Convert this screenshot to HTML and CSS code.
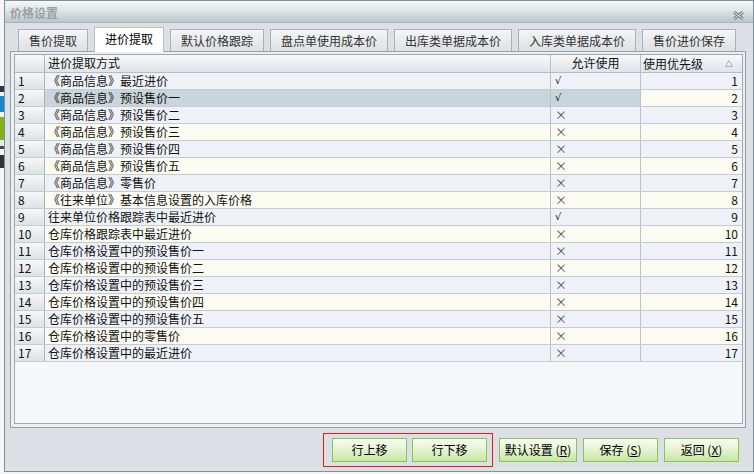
FILE: index.html
```html
<!DOCTYPE html>
<html lang="zh-CN">
<head>
<meta charset="utf-8">
<title>价格设置</title>
<link rel="stylesheet" href="styles.css">
</head>
<body>
<div class="screen">
  <div class="behind"></div>
  <div class="dialog">
    <div class="titlebar">
      <span class="title">价格设置</span>
      <svg class="close" width="11" height="9" viewBox="0 0 11 9">
        <path d="M1 1 L10 8 M10 1 L1 8" stroke="#707a7e" stroke-width="3" fill="none"/>
        <path d="M1 1 L10 8 M10 1 L1 8" stroke="#f2f4f4" stroke-width="1" fill="none"/>
      </svg>
    </div>
    <div class="tabs">
      <div class="tab">售价提取</div>
      <div class="tab active">进价提取</div>
      <div class="tab">默认价格跟踪</div>
      <div class="tab">盘点单使用成本价</div>
      <div class="tab">出库类单据成本价</div>
      <div class="tab">入库类单据成本价</div>
      <div class="tab">售价进价保存</div>
    </div>
    <div class="panel">
      <div class="grid">
        <div class="row head">
          <div class="c num"></div>
          <div class="c main">进价提取方式</div>
          <div class="c allow center">允许使用</div>
          <div class="c prio left">使用优先级<svg class="sort" width="8" height="7" viewBox="0 0 8 7"><path d="M4 0.5 L7.5 6.5 L0.5 6.5 Z" fill="none" stroke="#b0b4b8" stroke-width="1"/></svg></div>
        </div>
        <div class="row odd"><div class="c num">1</div><div class="c main">《商品信息》最近进价</div><div class="c allow ok">√</div><div class="c prio">1</div></div>
        <div class="row even sel"><div class="c num">2</div><div class="c main">《商品信息》预设售价一</div><div class="c allow ok">√</div><div class="c prio">2</div></div>
        <div class="row odd"><div class="c num">3</div><div class="c main">《商品信息》预设售价二</div><div class="c allow no">×</div><div class="c prio">3</div></div>
        <div class="row even"><div class="c num">4</div><div class="c main">《商品信息》预设售价三</div><div class="c allow no">×</div><div class="c prio">4</div></div>
        <div class="row odd"><div class="c num">5</div><div class="c main">《商品信息》预设售价四</div><div class="c allow no">×</div><div class="c prio">5</div></div>
        <div class="row even"><div class="c num">6</div><div class="c main">《商品信息》预设售价五</div><div class="c allow no">×</div><div class="c prio">6</div></div>
        <div class="row odd"><div class="c num">7</div><div class="c main">《商品信息》零售价</div><div class="c allow no">×</div><div class="c prio">7</div></div>
        <div class="row even"><div class="c num">8</div><div class="c main">《往来单位》基本信息设置的入库价格</div><div class="c allow no">×</div><div class="c prio">8</div></div>
        <div class="row odd"><div class="c num">9</div><div class="c main">往来单位价格跟踪表中最近进价</div><div class="c allow ok">√</div><div class="c prio">9</div></div>
        <div class="row even"><div class="c num">10</div><div class="c main">仓库价格跟踪表中最近进价</div><div class="c allow no">×</div><div class="c prio">10</div></div>
        <div class="row odd"><div class="c num">11</div><div class="c main">仓库价格设置中的预设售价一</div><div class="c allow no">×</div><div class="c prio">11</div></div>
        <div class="row even"><div class="c num">12</div><div class="c main">仓库价格设置中的预设售价二</div><div class="c allow no">×</div><div class="c prio">12</div></div>
        <div class="row odd"><div class="c num">13</div><div class="c main">仓库价格设置中的预设售价三</div><div class="c allow no">×</div><div class="c prio">13</div></div>
        <div class="row even"><div class="c num">14</div><div class="c main">仓库价格设置中的预设售价四</div><div class="c allow no">×</div><div class="c prio">14</div></div>
        <div class="row odd"><div class="c num">15</div><div class="c main">仓库价格设置中的预设售价五</div><div class="c allow no">×</div><div class="c prio">15</div></div>
        <div class="row even"><div class="c num">16</div><div class="c main">仓库价格设置中的零售价</div><div class="c allow no">×</div><div class="c prio">16</div></div>
        <div class="row odd"><div class="c num">17</div><div class="c main">仓库价格设置中的最近进价</div><div class="c allow no">×</div><div class="c prio">17</div></div>
      </div>
    </div>
    <div class="footer">
      <div class="mark">
        <button class="btn">行上移</button>
        <button class="btn">行下移</button>
      </div>
      <button class="btn w78">默认设置 (<u>R</u>)</button>
      <button class="btn">保存 (<u>S</u>)</button>
      <button class="btn">返回 (<u>X</u>)</button>
    </div>
  </div>
</div>
</body>
</html>
```
FILE: styles.css
```css
* { box-sizing: border-box; }
html, body { margin: 0; padding: 0; }
body {
  width: 754px; height: 474px; overflow: hidden;
  background: #f3f4f5;
  font-family: "Noto Sans CJK SC", "Liberation Sans", sans-serif;
  font-size: 12px; color: #111;
}
.screen { display: flex; align-items: flex-start; }
.behind {
  width: 4px; height: 472px; flex: none;
  background: linear-gradient(#f6f6f6 0, #f6f6f6 86px, #2a3550 86px, #2a3550 92px,
    #f0f0f0 92px, #f0f0f0 96px, #1c86c4 96px, #1c86c4 112px, #f4f4f4 112px, #f4f4f4 117px,
    #7fb21e 117px, #7fb21e 140px, #e8e8e8 140px, #e8e8e8 146px, #444 146px, #444 149px,
    #f4f4f4 149px, #f4f4f4 155px, #333 155px, #333 168px, #f6f6f6 168px);
}
.dialog {
  width: 750px; height: 472px; flex: none;
  border: 1px solid #7d9097;
  background: #dcdfe3;
  display: flex; flex-direction: column;
}
.titlebar {
  height: 22px; flex: none;
  background: linear-gradient(#f2f5f5, #dfe7e8 40%, #b9c8cc);
  border-top: 1px solid #f8fafa;
  border-bottom: 1px solid #a6b6ba;
  display: flex; align-items: center; justify-content: space-between;
  padding: 0 9px 0 5px;
}
.title { font-weight: bold; color: #9c9fa1; font-size: 12px; line-height: 14px; margin-top: 2px; }
.close { margin-top: 6px; }
.tabs {
  display: flex; align-items: flex-end; gap: 6px;
  height: 24px; margin-top: 4px; padding-left: 13px;
  position: relative; z-index: 1; flex: none;
}
.tab {
  height: 22px; padding: 0 10px;
  border: 1px solid #a7b2b7; border-bottom: none;
  background: linear-gradient(#f3f5f6, #dde1e4);
  color: #333; line-height: 21px; white-space: nowrap;
}
.tab.active {
  height: 25px; margin-bottom: -1px;
  background: #fff; color: #000; line-height: 22px;
  border-color: #b7c0c4;
}
.panel {
  height: 377px; flex: none;
  margin: 0 7px 0 5px;
  border: 1px solid #93a2a9;
  background: #eceff1;
  padding: 2px 2px 3px 3px;
}
.grid {
  height: 100%;
  border: 1px solid #9ea9af;
  background: #f5f7f9;
}
.row {
  display: grid;
  grid-template-columns: 30px 506px 90px 100px;
  height: 17px;
  border-bottom: 1px solid #c4ccd2;
}
.row.head {
  height: 18px;
  background: linear-gradient(#f7f8f9, #dfe4e7);
  border-bottom: 1px solid #b4bcc2;
}
.c {
  line-height: 16px; white-space: nowrap; overflow: hidden;
  border-right: 1px solid #b9c2c8;
  padding-left: 3px;
}
.c.prio { border-right: none; text-align: right; padding: 0 3px 0 0; }
.c.prio.left { text-align: left; padding-left: 2px; display: flex; align-items: center; justify-content: space-between; padding-right: 8px; }
.c.center { text-align: center; padding-left: 0; }
.c.allow { padding-left: 4px; }
.c.allow.center { padding-left: 0; }
.c.ok { font-family: "DejaVu Sans", sans-serif; font-size: 10px; }
.c.no { color: #555; }
.c.num { background: linear-gradient(#f6f7f8, #dde2e5); border-right-color: #a9b3b9; }
.row.head .c.num { background: transparent; }
.row.odd { background: #eef2f8; }
.row.even { background: #fcfbf1; }
.row.sel .main, .row.sel .allow { background: #c8d5dc; }
.footer {
  flex: 1;
  display: flex; align-items: center; justify-content: flex-end;
  padding: 0 14px 0 0; gap: 6px;
}
.mark {
  display: flex; gap: 5px;
  border: 1px solid #e41b1b;
  padding: 4px 5px 4px 8px;
}
.btn {
  width: 75px; height: 24px;
  border: 1px solid #86c55a;
  background: linear-gradient(#f7fbf1, #e6f4d4 45%, #c6e7a2);
  font-family: inherit; font-size: 12px; color: #000;
  padding: 0; line-height: 22px; border-radius: 0;
}
.btn.w78 { width: 78px; }
.btn u { text-decoration: underline; }
```
